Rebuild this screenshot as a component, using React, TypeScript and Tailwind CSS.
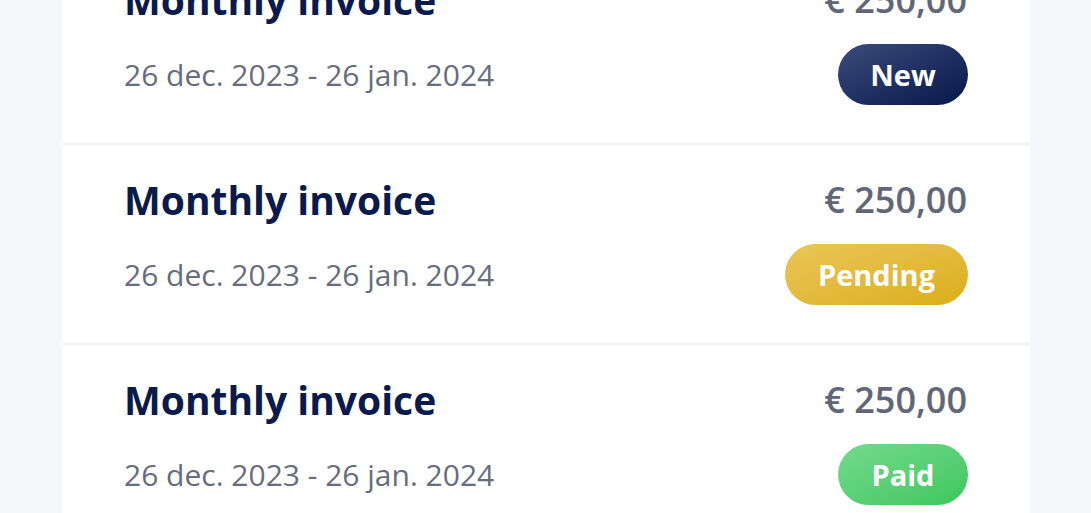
import React from 'react';

type Status = 'new' | 'pending' | 'paid';

type Invoice = {
  title: string;
  period: string;
  amount: string;
  status: Status;
};

const invoices: Invoice[] = [
  { title: 'Monthly invoice', period: '26 dec. 2023 - 26 jan. 2024', amount: '€ 250,00', status: 'new' },
  { title: 'Monthly invoice', period: '26 dec. 2023 - 26 jan. 2024', amount: '€ 250,00', status: 'pending' },
  { title: 'Monthly invoice', period: '26 dec. 2023 - 26 jan. 2024', amount: '€ 250,00', status: 'paid' },
];

const badgeStyles: Record<Status, { label: string; className: string }> = {
  new: { label: 'New', className: 'w-[130px] bg-gradient-to-br from-[#3b4b7c] to-[#07174a]' },
  pending: { label: 'Pending', className: 'w-[183px] bg-gradient-to-br from-[#e9c656] to-[#dcae12]' },
  paid: { label: 'Paid', className: 'w-[130px] bg-gradient-to-br from-[#74d98f] to-[#3cc75c]' },
};

function StatusBadge({ status }: { status: Status }) {
  const s = badgeStyles[status];
  return (
    <span
      className={`flex h-[61px] items-center justify-center rounded-full text-[29px] font-bold text-white ${s.className}`}
    >
      {s.label}
    </span>
  );
}

function InvoiceCard({ invoice }: { invoice: Invoice }) {
  return (
    <div className="bg-white px-[62px] pt-[30px] pb-[37px]">
      <div className="flex h-[48px] items-center justify-between">
        <span className="text-[39px] font-bold text-[#0a1b4b]">{invoice.title}</span>
        <span className="pr-[1px] text-[36px] font-semibold text-[#616679]">{invoice.amount}</span>
      </div>
      <div className="mt-[20px] flex items-center justify-between">
        <span className="text-[30px] text-[#676c7e]">{invoice.period}</span>
        <StatusBadge status={invoice.status} />
      </div>
    </div>
  );
}

export default function App() {
  return (
    <div
      className="h-[513px] overflow-hidden bg-[#f5f6fa]"
      style={{ fontFamily: '"Open Sans", "Noto Sans", sans-serif' }}
    >
      <div className="-mt-[54px] ml-[62px] flex w-[968px] flex-col gap-[4px]">
        {invoices.map((inv, i) => (
          <InvoiceCard key={i} invoice={inv} />
        ))}
      </div>
    </div>
  );
}
